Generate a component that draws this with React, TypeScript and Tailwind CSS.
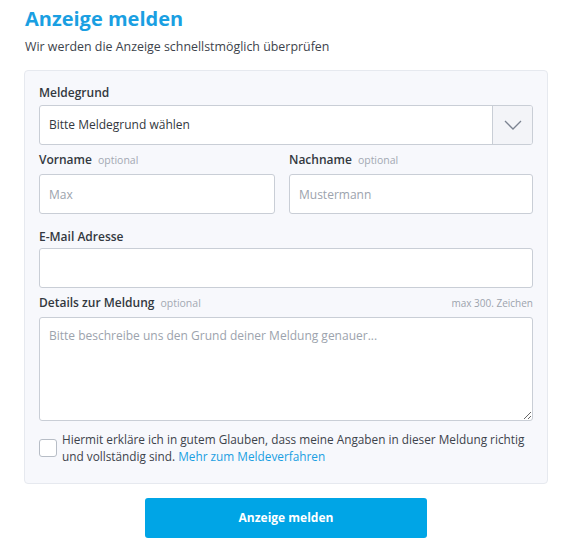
import { useState } from "react";

function Label({ text, optional }: { text: string; optional?: boolean }) {
  return (
    <div className="flex items-baseline gap-[6px] text-[12px] leading-[17px] font-semibold text-[#333840]">
      {text}
      {optional && <span className="text-[10.5px] font-normal text-[#a3a9b3]">optional</span>}
    </div>
  );
}

const inputCls =
  "h-[40px] w-full rounded-[3px] border border-[#c9ced6] bg-white px-[9px] text-[12px] text-[#333840] placeholder:text-[#9ca3ad] outline-none";

export default function App() {
  const [checked, setChecked] = useState(false);

  return (
    <div className="min-h-[547px] bg-white font-['Open_Sans',sans-serif] text-[#333840]">
      <div className="ml-[24px] w-[524px] pt-[4px]">
        <h1 className="pl-[1px] text-[20px] leading-[30px] font-bold text-[#1a9fe2]">Anzeige melden</h1>
        <p className="mt-[5px] pl-[1px] text-[12.4px] leading-[16px] text-[#3d434b]">
          Wir werden die Anzeige schnellstmöglich überprüfen
        </p>

        <div className="mt-[15px] rounded-[4px] border border-[#e6e9ef] bg-[#f7f8fc] px-[14px] pt-[13px] pb-[18px]">
          <Label text="Meldegrund" />
          <div className="mt-[4px] flex h-[40px] overflow-hidden rounded-[3px] border border-[#c9ced6] bg-white">
            <div className="flex flex-1 items-center px-[9px] text-[12px] text-[#333840]">Bitte Meldegrund wählen</div>
            <div className="flex w-[40px] items-center justify-center border-l border-[#c9ced6] bg-[#f3f4f8]">
              <svg width="18" height="10" viewBox="0 0 18 10" fill="none">
                <path d="M1 1l8 8 8-8" stroke="#7b8391" strokeWidth="1.3" />
              </svg>
            </div>
          </div>

          <div className="mt-[6px] grid grid-cols-[236px_1fr] gap-x-[14px]">
            <div>
              <Label text="Vorname" optional />
              <input className={`${inputCls} mt-[5px]`} placeholder="Max" />
            </div>
            <div>
              <Label text="Nachname" optional />
              <input className={`${inputCls} mt-[5px]`} placeholder="Mustermann" />
            </div>
          </div>

          <div className="mt-[14px]">
            <Label text="E-Mail Adresse" />
          </div>
          <input className={`${inputCls} mt-[3px]`} />

          <div className="mt-[6px] flex items-baseline justify-between">
            <Label text="Details zur Meldung" optional />
            <span className="text-[10px] text-[#9ca3ad]">max 300. Zeichen</span>
          </div>
          <textarea
            className="mt-[5px] block h-[104px] w-full resize-y rounded-[3px] border border-[#c9ced6] bg-white px-[9px] py-[8px] text-[12px] leading-[20px] text-[#333840] placeholder:text-[#9ca3ad] outline-none"
            placeholder="Bitte beschreibe uns den Grund deiner Meldung genauer..."
          />

          <label className="mt-[10px] flex items-center gap-[5px]">
            <input
              type="checkbox"
              checked={checked}
              onChange={(e) => setChecked(e.target.checked)}
              className="h-[18px] w-[18px] shrink-0 appearance-none rounded-[3px] border border-[#b7bdc6] bg-white"
            />
            <span className="text-[11.8px] leading-[17px] text-[#3d434b]">
              Hiermit erkläre ich in gutem Glauben, dass meine Angaben in dieser Meldung richtig und vollständig sind.{" "}
              <a className="text-[#1a9fe2]" href="#">
                Mehr zum Meldeverfahren
              </a>
            </span>
          </label>
        </div>

        <div className="mt-[14px] flex justify-center">
          <button className="h-[40px] w-[282px] rounded-[3px] bg-[#00a5e6] text-[12px] font-bold text-white">
            Anzeige melden
          </button>
        </div>
      </div>
    </div>
  );
}
